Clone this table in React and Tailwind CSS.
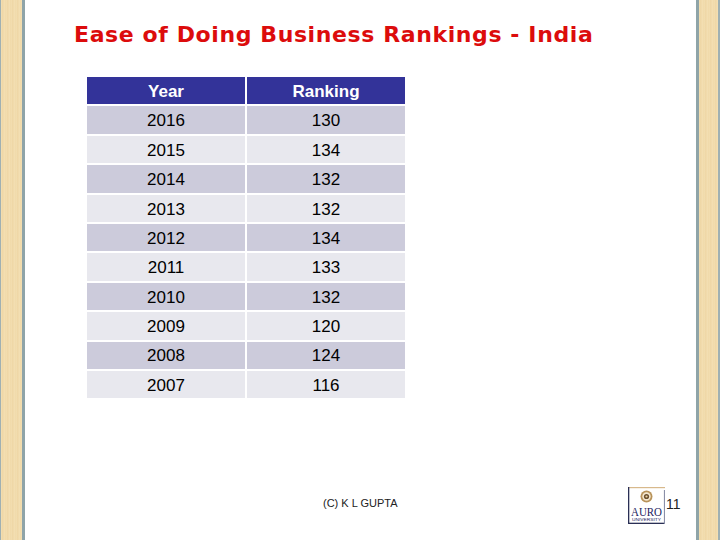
import React from "react";

const rows = [
  ["2016", "130"],
  ["2015", "134"],
  ["2014", "132"],
  ["2013", "132"],
  ["2012", "134"],
  ["2011", "133"],
  ["2010", "132"],
  ["2009", "120"],
  ["2008", "124"],
  ["2007", "116"],
];

function Strip({ side }) {
  const beige =
    "h-full bg-[#f1dbab] bg-[repeating-linear-gradient(90deg,#f3dfb3_0px,#eed5a3_2px,#f4e0b5_3px,#f0d9a8_5px)]";
  if (side === "left") {
    return (
      <div className="flex h-full w-[25px] shrink-0">
        <div className="h-full w-[1px] bg-[#9fb0b2]" />
        <div className={`${beige} w-[21px]`} />
        <div className="h-full w-[3px] bg-[#8fa4a8]" />
      </div>
    );
  }
  return (
    <div className="flex h-full w-[24px] shrink-0">
      <div className="h-full w-[3px] bg-[#8fa4a8]" />
      <div className={`${beige} w-[19px]`} />
      <div className="h-full w-[2px] bg-[#9fb0b2]" />
    </div>
  );
}

function Logo() {
  return (
    <svg width="37" height="37" viewBox="0 0 37 37" className="block overflow-visible">
      <rect x="0" y="0" width="37" height="37" fill="#ffffff" />
      <rect x="0" y="0" width="37" height="1.2" fill="#d8b98c" />
      <rect x="0" y="0" width="1.3" height="37" fill="#2a2f55" />
      <rect x="0" y="35.7" width="37" height="1.3" fill="#2a2f55" />
      <rect x="35.9" y="3" width="1.1" height="34" fill="#8a8fa8" />
      <circle cx="18.5" cy="9.5" r="6" fill="#b8935a" />
      <circle cx="18.5" cy="9.5" r="4.2" fill="#f4e7cf" />
      <circle cx="18.5" cy="9.5" r="2.6" fill="#6b5030" />
      <circle cx="18.5" cy="9.5" r="1.1" fill="#e9d2a2" />
      <text
        x="3"
        y="29"
        fontFamily="'Liberation Serif', serif"
        fontSize="13"
        fill="#1c2260"
        textLength="31"
        lengthAdjust="spacingAndGlyphs"
      >
        AURO
      </text>
      <text
        x="4"
        y="33.5"
        fontFamily="'Liberation Sans', sans-serif"
        fontSize="3"
        fill="#1c2260"
        textLength="29"
        lengthAdjust="spacingAndGlyphs"
      >
        UNIVERSITY
      </text>
    </svg>
  );
}

export default function App() {
  return (
    <div className="flex h-[540px] w-[720px] bg-white font-['Liberation_Sans',Arial,sans-serif] text-black">
      <Strip side="left" />
      <div className="flex min-w-0 flex-1 flex-col">
        <h1 className="ml-[49px] mt-[21px] whitespace-nowrap font-['DejaVu_Sans',Verdana,sans-serif] text-[22px] font-bold leading-[28px] tracking-[0.6px] text-[#dc0c0c]">
          Ease of Doing Business Rankings - India
        </h1>
        <div className="ml-[62px] mt-[28px] grid w-[318px] grid-cols-2 gap-x-[2px] gap-y-[2px]">
          <div className="flex h-[27.4px] items-center justify-center bg-[#333399] pt-[2px] text-[17px] font-bold text-white">
            Year
          </div>
          <div className="flex h-[27.4px] items-center justify-center bg-[#333399] pt-[2px] text-[17px] font-bold text-white">
            Ranking
          </div>
          {rows.map(([y, r], i) => {
            const bg = i % 2 === 0 ? "bg-[#cccbdb]" : "bg-[#e8e8ee]";
            return (
              <React.Fragment key={y}>
                <div className={`flex h-[27.4px] items-center justify-center pt-[2px] text-[17px] ${bg}`}>
                  {y}
                </div>
                <div className={`flex h-[27.4px] items-center justify-center pt-[2px] text-[17px] ${bg}`}>
                  {r}
                </div>
              </React.Fragment>
            );
          })}
        </div>
        <div className="mt-[89px] flex items-start">
          <div className="ml-[298px] mt-[10px] w-[80px] whitespace-nowrap text-[11px] leading-[12px] text-[#222]">
            (C) K L GUPTA
          </div>
          <div className="ml-[225px]">
            <Logo />
          </div>
          <div className="ml-[1px] mt-[9px] text-[14px] leading-[16px] text-[#222]">11</div>
        </div>
      </div>
      <Strip side="right" />
    </div>
  );
}
